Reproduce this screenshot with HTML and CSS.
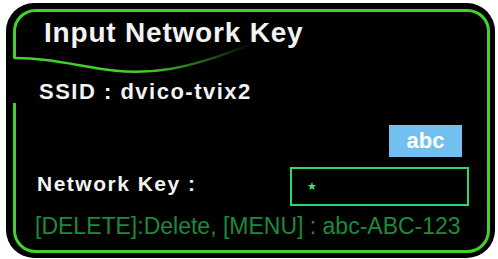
FILE: index.html
```html
<!DOCTYPE html>
<html>
<head>
<meta charset="utf-8">
<link rel="stylesheet" href="styles.css">
</head>
<body>
<div class="card">
  <svg class="frame" width="489" height="255" viewBox="0 0 489 255" xmlns="http://www.w3.org/2000/svg">
    <defs>
      <linearGradient id="wave" x1="8" y1="0" x2="248" y2="0" gradientUnits="userSpaceOnUse">
        <stop offset="0" stop-color="#44d12b"/>
        <stop offset="0.55" stop-color="#44d12b"/>
        <stop offset="1" stop-color="#44d12b" stop-opacity="0"/>
      </linearGradient>
    </defs>
    <path d="M8.5,55 L8.5,28.5 A21,21 0 0 1 29.5,7.5 L461.5,7.5 A21,21 0 0 1 482.5,28.5 L482.5,227.5 A21,21 0 0 1 461.5,248.5 L29.5,248.5 A21,21 0 0 1 8.5,227.5 L8.5,100" fill="none" stroke="#44d12b" stroke-width="3"/>
    <path d="M8.5,55 C34,55 54,59 84,64 C109,69 134,71 164,66 C194,61 219,51 248,40" fill="none" stroke="url(#wave)" stroke-width="2.4" stroke-linecap="round"/>
  </svg>
  <div class="title">Input Network Key</div>
  <div class="ssid">SSID : dvico-tvix2</div>
  <div class="mode-row"><div class="mode">abc</div></div>
  <div class="key-row">
    <div class="key-label">Network Key :</div>
    <div class="key-box"><span class="star">★</span></div>
  </div>
  <div class="hint">[DELETE]:Delete, [MENU] : abc-ABC-123</div>
</div>
</body>
</html>
```

FILE: styles.css
```css
html, body {
  margin: 0;
  padding: 0;
  background: #ffffff;
}

.card {
  position: relative;
  box-sizing: border-box;
  margin: 3px 0 0 6px;
  width: 489px;
  height: 255px;
  background: #000000;
  border-radius: 28px;
  padding-top: 14px;
  font-family: "Liberation Sans", Arial, sans-serif;
  overflow: hidden;
}

.frame {
  position: absolute;
  left: 0;
  top: 0;
}

.title {
  position: relative;
  padding-left: 38px;
  font-size: 28px;
  line-height: 32px;
  font-weight: bold;
  letter-spacing: 0.8px;
  color: #f3f3f3;
}

.ssid {
  margin-top: 30px;
  padding-left: 33px;
  font-size: 22px;
  line-height: 26px;
  font-weight: bold;
  letter-spacing: 1.5px;
  color: #f3f3f3;
}

.mode-row {
  display: flex;
  justify-content: flex-end;
  margin-top: 20px;
  padding-right: 33px;
}

.mode {
  width: 73px;
  height: 32px;
  background: #72c0f0;
  color: #ffffff;
  font-size: 22px;
  font-weight: bold;
  line-height: 32px;
  text-align: center;
}

.key-row {
  display: flex;
  align-items: flex-start;
  margin-top: 10px;
  padding-left: 31px;
}

.key-label {
  width: 253px;
  margin-top: 5px;
  font-size: 21px;
  line-height: 24px;
  font-weight: bold;
  letter-spacing: 1.5px;
  color: #f3f3f3;
}

.key-box {
  box-sizing: border-box;
  width: 179px;
  height: 39px;
  border: 2px solid #2bd86a;
  padding-left: 15px;
  display: flex;
  align-items: center;
}

.star {
  font-family: "DejaVu Sans", sans-serif;
  font-size: 11px;
  color: #36e27a;
  line-height: 12px;
  margin-top: 1px;
}

.hint {
  margin-top: 7px;
  padding-left: 29px;
  font-size: 23px;
  line-height: 26px;
  color: #1c8a3b;
  white-space: nowrap;
}
```
